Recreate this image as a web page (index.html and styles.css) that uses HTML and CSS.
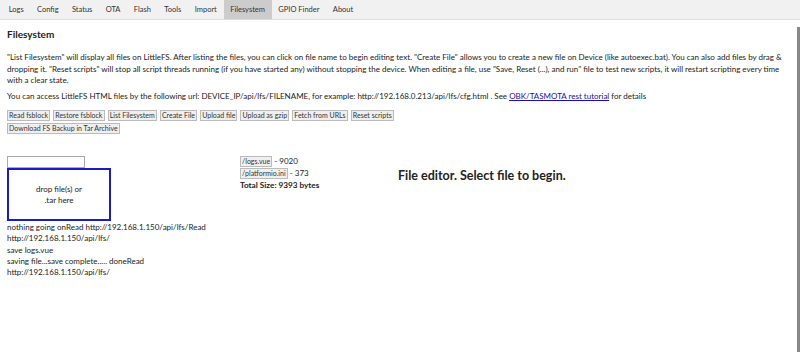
FILE: index.html
```html
<!DOCTYPE html>
<html>
<head>
    <title>Filesystem</title>
    <link rel="stylesheet" href="styles.css">
</head>
<body>
    <div class="tabs">
        <button class="tab">Logs</button>
        <button class="tab">Config</button>
        <button class="tab">Status</button>
        <button class="tab">OTA</button>
        <button class="tab">Flash</button>
        <button class="tab">Tools</button>
        <button class="tab">Import</button>
        <button class="tab active">Filesystem</button>
        <button class="tab">GPIO Finder</button>
        <button class="tab">About</button>
    </div>

    <div class="content">
        <h3>Filesystem</h3>
        <p>"List Filesystem" will display all files on LittleFS. After listing the files, you can click on file name to begin editing text. "Create File" allows you to create a new file on Device (like autoexec.bat). You can also add files by drag &amp; dropping it. "Reset scripts" will stop all script threads running (if you have started any) without stopping the device. When editing a file, use "Save, Reset (...), and run" file to test new scripts, it will restart scripting every time with a clear state.</p>
        <p>You can access LittleFS HTML files by the following url: DEVICE_IP/api/lfs/FILENAME, for example: http://192.168.0.213/api/lfs/cfg.html . See <a href="#">OBK/TASMOTA rest tutorial</a> for details</p>

        <div class="actions">
            <button class="btn">Read fsblock</button>
            <button class="btn">Restore fsblock</button>
            <button class="btn">List Filesystem</button>
            <button class="btn">Create File</button>
            <button class="btn">Upload file</button>
            <button class="btn">Upload as gzip</button>
            <button class="btn">Fetch from URLs</button>
            <button class="btn">Reset scripts</button>
            <div class="break"></div>
            <button class="btn">Download FS Backup in Tar Archive</button>
        </div>

        <div class="workspace">
            <div class="left">
                <input type="text" class="input-box">
                <div class="dropzone">drop file(s) or<br>.tar here</div>
                <div class="log">
                    nothing going onRead http://192.168.1.150/api/lfs/Read<br>
                    http://192.168.1.150/api/lfs/<br>
                    save logs.vue<br>
                    saving file...save complete..... doneRead<br>
                    http://192.168.1.150/api/lfs/
                </div>
            </div>
            <div class="files">
                <div class="file-row"><button class="btn">/logs.vue</button> - 9020</div>
                <div class="file-row"><button class="btn">/platformio.ini</button> - 373</div>
                <div class="total">Total Size: 9393 bytes</div>
            </div>
            <div class="editor">
                <h2>File editor. Select file to begin.</h2>
            </div>
        </div>
    </div>

    <div class="scrollbar"></div>
</body>
</html>
```

FILE: styles.css
```css
body {
    font-family: Lato, "Noto Sans", sans-serif;
    font-size: 8px;
    color: #222;
    margin: 0;
    padding: 0;
    background-color: #fff;
}
.tabs {
    display: flex;
    height: 19px;
    padding-left: 2px;
    background-color: #f1f1f1;
    border-bottom: 1px solid #ddd;
}
.tab {
    font-family: inherit;
    font-size: 7.5px;
    color: #333;
    background: none;
    border: none;
    padding: 0 6.7px;
}
.tab.active {
    background-color: #ccc;
}
.content {
    padding: 0 7px;
}
h3 {
    font-size: 10px;
    margin: 8px 0 12px;
}
p {
    margin: 0 0 4px;
    line-height: 11.5px;
}
a {
    color: #1a0dab;
}
.actions {
    display: flex;
    flex-wrap: wrap;
    gap: 1px 3px;
    margin-top: 8px;
}
.break {
    flex-basis: 100%;
    height: 0;
}
.btn {
    font-family: inherit;
    font-size: 7px;
    color: #333;
    background-color: #efefef;
    border: 1px solid #bbb;
    padding: 0 1.1px;
    height: 11px;
    line-height: 9px;
}
.workspace {
    display: flex;
    margin-top: 22px;
}
.left {
    width: 233px;
}
.input-box {
    display: block;
    width: 78px;
    height: 12px;
    box-sizing: border-box;
    border: 1px solid #aaa;
    margin: 0;
}
.dropzone {
    width: 104px;
    height: 53px;
    box-sizing: border-box;
    border: 2px solid #1a1acc;
    display: flex;
    align-items: center;
    justify-content: center;
    text-align: center;
    line-height: 11px;
}
.log {
    margin-top: 1px;
    line-height: 11.3px;
}
.files {
    width: 158px;
}
.file-row {
    height: 12px;
}
.total {
    font-weight: bold;
    font-size: 8.2px;
}
.editor h2 {
    font-size: 12.5px;
    margin: 12px 0 0;
}
.scrollbar {
    position: fixed;
    right: 0;
    top: 27px;
    bottom: 0;
    width: 3px;
    background-color: #888;
}
```
